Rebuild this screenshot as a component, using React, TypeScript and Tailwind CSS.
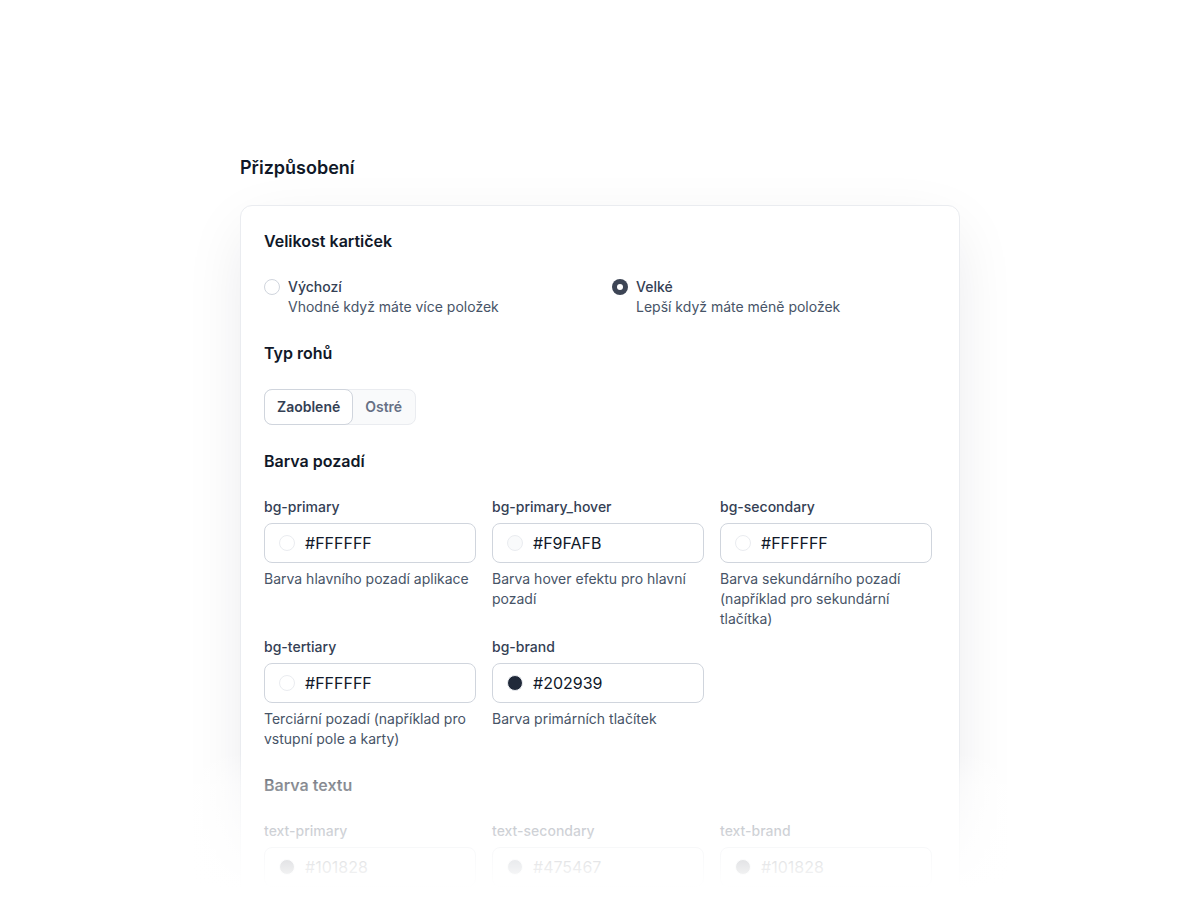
import { useState } from 'react'

type ColorField = {
  name: string
  value: string
  hint?: string
}

const bgColors: ColorField[] = [
  { name: 'bg-primary', value: '#FFFFFF', hint: 'Barva hlavního pozadí aplikace' },
  { name: 'bg-primary_hover', value: '#F9FAFB', hint: 'Barva hover efektu pro hlavní pozadí' },
  { name: 'bg-secondary', value: '#FFFFFF', hint: 'Barva sekundárního pozadí (například pro sekundární tlačítka)' },
  { name: 'bg-tertiary', value: '#FFFFFF', hint: 'Terciární pozadí (například pro vstupní pole a karty)' },
  { name: 'bg-brand', value: '#202939', hint: 'Barva primárních tlačítek' },
]

const textColors: ColorField[] = [
  { name: 'text-primary', value: '#101828' },
  { name: 'text-secondary', value: '#475467' },
  { name: 'text-brand', value: '#101828' },
]

const sizes = [
  { id: 'default', label: 'Výchozí', hint: 'Vhodné když máte více položek' },
  { id: 'large', label: 'Velké', hint: 'Lepší když máte méně položek' },
]

function Radio({ checked }: { checked: boolean }) {
  if (checked) {
    return (
      <span className="mt-0.5 flex h-4 w-4 shrink-0 items-center justify-center rounded-full bg-[#3d4555]">
        <span className="h-1.5 w-1.5 rounded-full bg-white" />
      </span>
    )
  }
  return <span className="mt-0.5 h-4 w-4 shrink-0 rounded-full border border-[#D0D5DD] bg-white" />
}

function ColorInput({ field }: { field: ColorField }) {
  return (
    <div className="flex flex-col">
      <label className="text-sm leading-5 font-medium text-[#344054]">{field.name}</label>
      <div className="mt-1.5 flex h-10 items-center gap-2.5 rounded-lg border border-[#D0D5DD] bg-white px-3.5">
        <span
          className="h-4 w-4 shrink-0 rounded-full border border-[#EAECF0]"
          style={{ backgroundColor: field.value }}
        />
        <span className="text-base text-[#101828]">{field.value}</span>
      </div>
      {field.hint && <p className="mt-1.5 text-sm leading-5 text-[#475467]">{field.hint}</p>}
    </div>
  )
}

export default function App() {
  const [size, setSize] = useState('large')
  const [corners, setCorners] = useState<'rounded' | 'sharp'>('rounded')

  return (
    <div
      className="relative h-[900px] overflow-hidden bg-white"
      style={{ fontFamily: 'Inter, "Noto Sans", sans-serif' }}
    >
      <div className="mx-auto w-[720px] pt-[154px]">
        <h1 className="text-lg leading-7 font-semibold text-[#101828]">Přizpůsobení</h1>

        <div className="mt-[23px] flex flex-col gap-6 rounded-xl border border-[#EAECF0] bg-white p-[23px] shadow-[0_20px_64px_-8px_rgba(16,24,40,0.10)]">
          <h2 className="text-base leading-6 font-semibold text-[#101828]">Velikost kartiček</h2>
          <div className="grid grid-cols-2 gap-6">
            {sizes.map((s) => (
              <button key={s.id} onClick={() => setSize(s.id)} className="flex items-start gap-2 text-left">
                <Radio checked={size === s.id} />
                <div>
                  <p className="text-sm leading-5 font-medium text-[#344054]">{s.label}</p>
                  <p className="text-sm leading-5 text-[#475467]">{s.hint}</p>
                </div>
              </button>
            ))}
          </div>

          <h2 className="text-base leading-6 font-semibold text-[#101828]">Typ rohů</h2>
          <div className="flex w-fit rounded-lg border border-[#EAECF0] bg-[#F9FAFB]">
            <button
              onClick={() => setCorners('rounded')}
              className={
                corners === 'rounded'
                  ? '-m-px h-9 rounded-lg border border-[#D0D5DD] bg-white px-3 text-sm font-semibold text-[#344054]'
                  : 'h-[34px] px-3 text-sm font-semibold text-[#667085]'
              }
            >
              Zaoblené
            </button>
            <button
              onClick={() => setCorners('sharp')}
              className={
                corners === 'sharp'
                  ? '-m-px h-9 rounded-lg border border-[#D0D5DD] bg-white px-3 text-sm font-semibold text-[#344054]'
                  : 'h-[34px] px-[13px] text-sm font-semibold text-[#667085]'
              }
            >
              Ostré
            </button>
          </div>

          <h2 className="text-base leading-6 font-semibold text-[#101828]">Barva pozadí</h2>
          <div className="grid grid-cols-[212px_212px_212px] gap-x-4 gap-y-2">
            {bgColors.map((f) => (
              <ColorInput key={f.name} field={f} />
            ))}
          </div>

          <h2 className="text-base leading-6 font-semibold text-[#101828]">Barva textu</h2>
          <div className="grid grid-cols-[212px_212px_212px] gap-x-4 gap-y-2">
            {textColors.map((f) => (
              <ColorInput key={f.name} field={f} />
            ))}
          </div>
        </div>
      </div>

      {/* fade-out over the lower part of the card */}
      <div className="pointer-events-none absolute inset-x-0 top-[752px] bottom-0 bg-[linear-gradient(to_bottom,rgba(255,255,255,0)_0%,rgba(255,255,255,0.5)_22%,rgba(255,255,255,0.75)_52%,rgba(255,255,255,0.9)_76%,rgba(255,255,255,1)_92%)]" />
    </div>
  )
}
